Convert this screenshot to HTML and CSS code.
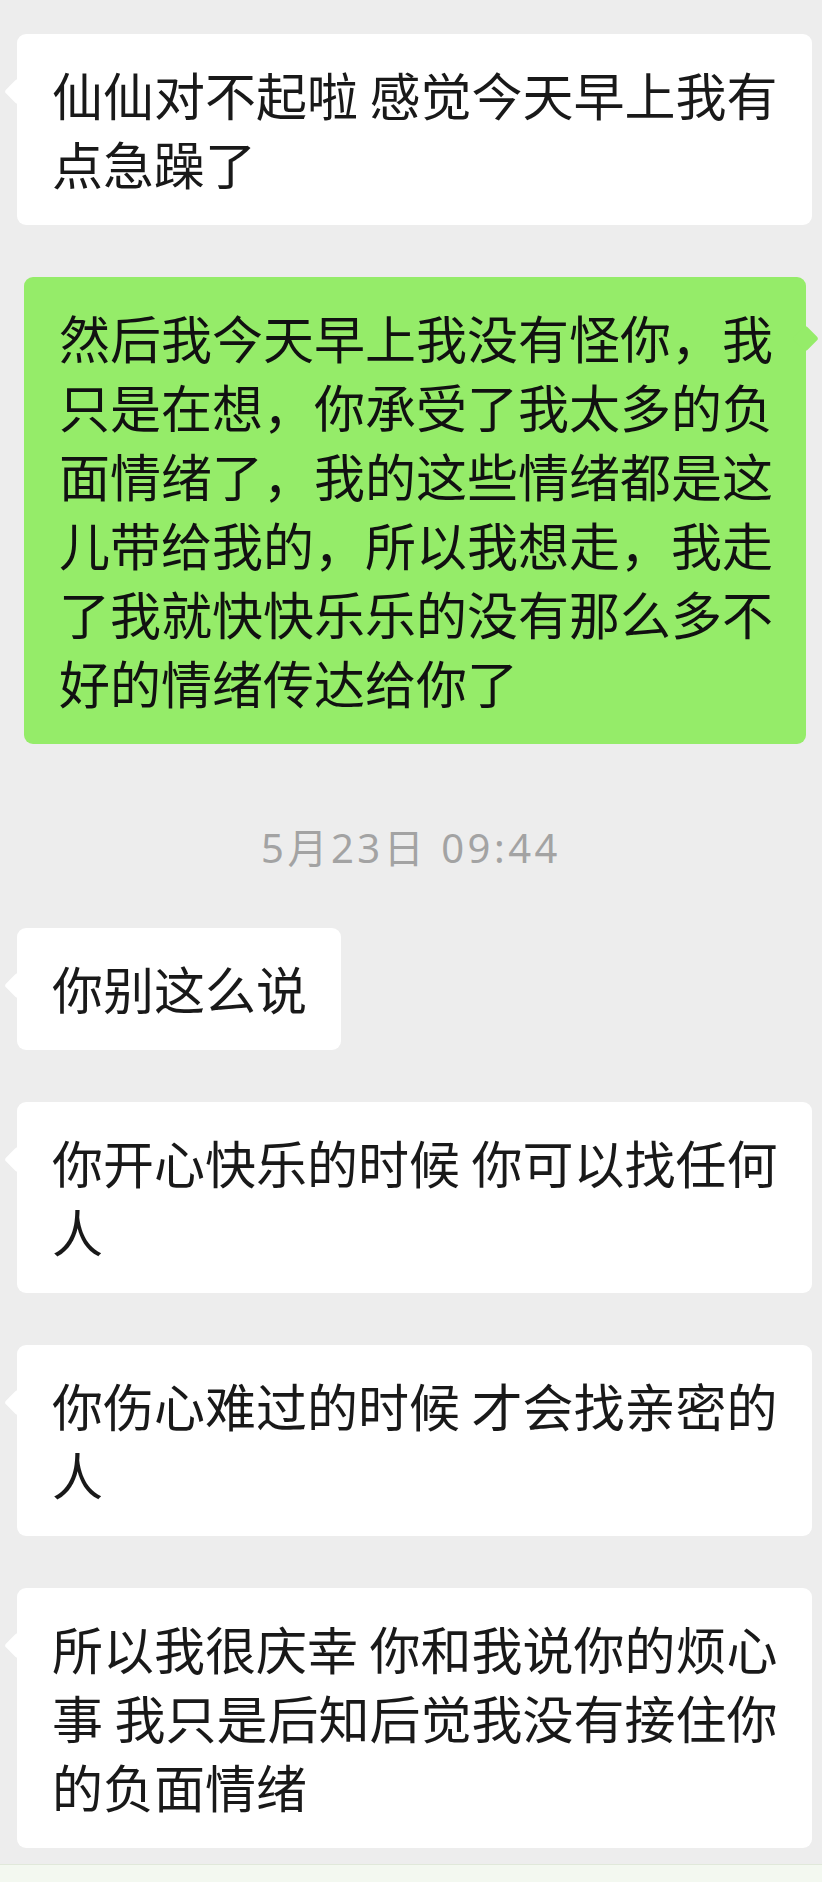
FILE: index.html
```html
<!DOCTYPE html>
<html lang="zh-CN">
<head>
  <meta charset="UTF-8">
  <title>聊天记录</title>
  <link rel="stylesheet" href="styles.css">
</head>
<body>
  <div class="chat">
    <div class="msg left">仙仙对不起啦 感觉今天早上我有点急躁了</div>
    <div class="msg right">然后我今天早上我没有怪你，我只是在想，你承受了我太多的负面情绪了，我的这些情绪都是这儿带给我的，所以我想走，我走了我就快快乐乐的没有那么多不好的情绪传达给你了</div>

    <div class="time">5月23日 09:44</div>

    <div class="msg left">你别这么说</div>
    <div class="msg left">你开心快乐的时候 你可以找任何人</div>
    <div class="msg left">你伤心难过的时候 才会找亲密的人</div>
    <div class="msg left">所以我很庆幸 你和我说你的烦心事 我只是后知后觉我没有接住你的负面情绪</div>
  </div>
  <div class="bottom-bar"></div>
</body>
</html>
```

FILE: styles.css
```css
body {
  margin: 0;
  background: #ededed;
  font-family: "Noto Sans CJK SC", "Noto Sans", sans-serif;
  color: #191919;
}
.chat {
  display: flex;
  flex-direction: column;
  gap: 52px;
  padding-top: 34px;
}
.msg {
  position: relative;
  box-sizing: border-box;
  width: fit-content;
  font-size: 51px;
  line-height: 69px;
  padding: 26px 34px 27px 35px;
  border-radius: 9px;
}
.msg::before {
  content: "";
  position: absolute;
  top: 48px;
  width: 19px;
  height: 19px;
  border-radius: 3px;
  transform: rotate(45deg);
}
.left {
  margin-left: 17px;
  max-width: 795px;
  background: #fff;
}
.left::before {
  left: -9px;
  background: #fff;
}
.right {
  align-self: flex-end;
  margin-right: 16px;
  max-width: 782px;
  padding-right: 32px;
  background: #95ec69;
  color: #111;
}
.right::before {
  right: -9px;
  top: 52px;
  background: #95ec69;
}
.time {
  margin: 32px 0 8px;
  text-align: center;
  font-family: "Noto Sans", "Noto Sans CJK SC", sans-serif;
  font-size: 40px;
  line-height: 40px;
  letter-spacing: 3.5px;
  color: #a3a3a3;
}
.bottom-bar {
  margin-top: 16px;
  height: 18px;
  border-top: 1px solid #e0e8da;
  background: #f3f8f0;
}
```
